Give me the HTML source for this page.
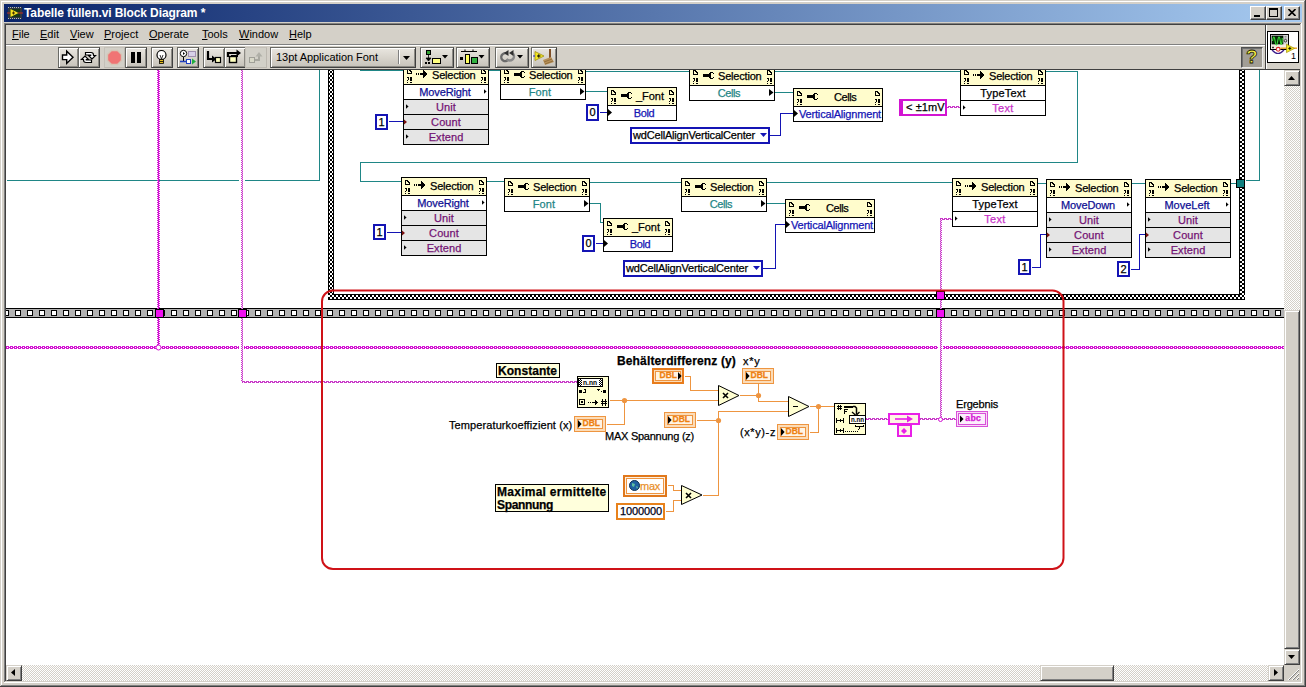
<!DOCTYPE html>
<html><head><meta charset="utf-8">
<style>
html,body{margin:0;padding:0;}
body{width:1306px;height:687px;overflow:hidden;background:#d4d0c8;font-family:"Liberation Sans",sans-serif;font-size:11px;position:relative;}
.a{position:absolute;}
.tx{white-space:nowrap;font-size:11px;line-height:13px;letter-spacing:-0.25px;-webkit-text-stroke:0.25px currentColor;}
#win{position:absolute;left:0;top:0;width:1306px;height:687px;background:#d4d0c8;overflow:hidden;}
#title{left:4px;top:4px;width:1298px;height:18px;background:linear-gradient(90deg,#0a246a 0%,#a6caf0 100%);}
#title .t{left:20px;top:2px;color:#fff;font-weight:bold;font-size:12px;white-space:nowrap;letter-spacing:-0.1px;}
.wb{position:absolute;top:6px;width:16px;height:14px;background:#d4d0c8;box-sizing:border-box;border:1px solid;border-color:#fff #404040 #404040 #fff;box-shadow:inset -1px -1px 0 #808080;}
#menu{left:6px;top:25px;width:1259px;height:19px;}
#menu span{position:absolute;top:3px;font-size:11px;color:#000;white-space:nowrap;}
.tb{position:absolute;top:47px;height:21px;box-sizing:border-box;background:linear-gradient(#e9e6e0,#d8d4cc 50%,#c6c2ba);border:1px solid;border-color:#6a6a66 #404040 #404040 #6a6a66;box-shadow:inset 1px 1px 0 #fff,inset -1px -1px 0 #8c8a84;}
.tb.flat{border-color:#c4c0b8 #bcb8b0 #bcb8b0 #c4c0b8;box-shadow:none;background:#d2d0c8;}
.tb.pr{border-color:#505050 #e8e8e8 #e8e8e8 #505050;background:#a29e96;box-shadow:inset 1px 1px 0 #707070;}
#canvas{left:6px;top:70px;width:1278px;height:595px;background:#fff;overflow:hidden;}
#cv{position:absolute;left:-6px;top:-70px;width:1306px;height:687px;}
.dither{background-image:conic-gradient(#fff 25%,#d4d0c8 0 50%,#fff 0 75%,#d4d0c8 0);background-size:2px 2px;}
.sbtn{position:absolute;box-sizing:border-box;background:#d4d0c8;border:1px solid;border-color:#d4d0c8 #404040 #404040 #d4d0c8;box-shadow:inset 1px 1px 0 #fff,inset -1px -1px 0 #808080;}
</style></head><body>
<div id="win">
<svg width="0" height="0" style="position:absolute"><defs>
<g id="doc"><path d="M0,0h3v1h1v1h1v3h-5z" fill="#000"/><path d="M1,1h1v1h1v1h1v1h-3z" fill="#fffccc"/>
<path d="M0,8h2v3h-1v-2h-1z M0,11h1v1h-1z M0,13h1v1h-1z M3,8h2v4h-2z M3,13h2v1h-2z" fill="#000"/></g>
<g id="inv"><rect x="0" y="4" width="1" height="2" fill="#000"/><rect x="2" y="4" width="1" height="2" fill="#000"/><rect x="4" y="4" width="5" height="2" fill="#000"/><path d="M7,1h1v1h1v1h1v1h1v2h-1v1h-1v1h-1v1h-1z" fill="#000"/></g>
<g id="prop"><rect x="0" y="4" width="7" height="3" fill="#000"/><path d="M7,2h3v1h1v1h-1v-1h-2v5h2v-1h1v1h-1v1h-3v-1h-1v-5h1z" fill="#000"/></g>
<pattern id="chk" width="2" height="2" patternUnits="userSpaceOnUse"><rect width="2" height="2" fill="#fff"/><rect width="1" height="1" fill="#000"/><rect x="1" y="1" width="1" height="1" fill="#000"/></pattern>
</defs></svg>
<div class="a" style="left:1px;top:1px;width:1303px;height:1px;background:#fff"></div>
<div class="a" style="left:1px;top:1px;width:1px;height:684px;background:#fff"></div>
<div class="a" style="left:0;top:686px;width:1306px;height:1px;background:#404040"></div>
<div class="a" style="left:1305px;top:0;width:1px;height:687px;background:#404040"></div>
<div class="a" style="left:1px;top:685px;width:1304px;height:1px;background:#808080"></div>
<div class="a" style="left:1304px;top:1px;width:1px;height:685px;background:#808080"></div>
<div id="title" class="a">
<svg class="a" style="left:3px;top:1px" width="16" height="16"><rect x="1" y="2" width="14" height="12" fill="#303840"/><path d="M1,2.5h14M1,13.5h14" stroke="#b0b8c0" stroke-dasharray="1,1"/><rect x="3" y="4" width="10" height="8" fill="#183818"/><path d="M3.5,4l8,4l-8,4z" fill="#f8e020"/><path d="M5,8h3M6.5,6.5v3" stroke="#403000"/><path d="M0,8h3M11,8h5" stroke="#c03020"/></svg>
<div class="a t">Tabelle füllen.vi Block Diagram *</div></div>
<div class="wb" style="left:1250px"><svg class="a" style="left:3px;top:8px" width="6" height="2"><rect width="6" height="2" fill="#000"/></svg></div>
<div class="wb" style="left:1266px"><svg class="a" style="left:2px;top:1px" width="9" height="9"><rect x="0.5" y="1" width="8" height="7.5" fill="none" stroke="#000"/><rect x="0" y="0" width="9" height="2" fill="#000"/></svg></div>
<div class="wb" style="left:1284px"><svg class="a" style="left:3px;top:2px" width="8" height="7"><path d="M0.5,0l7,7M7.5,0l-7,7" stroke="#000" stroke-width="1.6"/></svg></div>
<div class="a" style="left:4px;top:23px;width:1298px;height:1px;background:#808080"></div>
<div class="a" style="left:4px;top:23px;width:1px;height:660px;background:#808080"></div>
<div class="a" style="left:5px;top:24px;width:1296px;height:1px;background:#404040"></div>
<div class="a" style="left:5px;top:24px;width:1px;height:658px;background:#404040"></div>
<div class="a" style="left:4px;top:682px;width:1298px;height:1px;background:#fff"></div>
<div class="a" style="left:1301px;top:23px;width:1px;height:660px;background:#fff"></div>
<div class="a" style="left:5px;top:681px;width:1296px;height:1px;background:#d4d0c8"></div>
<div class="a" style="left:1300px;top:24px;width:1px;height:658px;background:#d4d0c8"></div>
<div id="menu" class="a">
<span style="left:6px"><u>F</u>ile</span><span style="left:34px"><u>E</u>dit</span><span style="left:64px"><u>V</u>iew</span><span style="left:98px"><u>P</u>roject</span><span style="left:143px"><u>O</u>perate</span><span style="left:196px"><u>T</u>ools</span><span style="left:233px"><u>W</u>indow</span><span style="left:283px"><u>H</u>elp</span>
</div>
<div class="a" style="left:6px;top:44px;width:1259px;height:1px;background:#808080"></div>
<div class="a" style="left:6px;top:45px;width:1259px;height:1px;background:#fff"></div>
<div id="canvas" class="a"><div id="cv">
<svg class="a" style="left:0;top:0" width="1306" height="687" shape-rendering="crispEdges"><defs>
<pattern id="ring" width="4" height="4" patternUnits="userSpaceOnUse" x="1" y="2"><rect width="4" height="4" fill="#000"/><rect x="1" y="0" width="2" height="1" fill="#fff"/><rect x="1" y="3" width="2" height="1" fill="#fff"/><rect x="0" y="1" width="1" height="2" fill="#fff"/><rect x="3" y="1" width="1" height="2" fill="#fff"/></pattern>
<pattern id="chain" width="4" height="3" patternUnits="userSpaceOnUse" x="2" y="346"><rect x="0" y="0" width="3" height="3" fill="#d214d2"/><rect x="1" y="1" width="1" height="1" fill="#fff"/><rect x="3" y="1" width="1" height="1" fill="#d214d2"/></pattern>
<pattern id="hthin" width="4" height="2" patternUnits="userSpaceOnUse" x="0" y="0"><rect x="0" y="0" width="3" height="1" fill="#c838c8"/><rect x="2" y="1" width="3" height="1" fill="#c838c8"/><rect x="0" y="1" width="1" height="1" fill="#c838c8"/></pattern>
<pattern id="vthin" width="2" height="2" patternUnits="userSpaceOnUse" x="1" y="0"><rect x="0" y="0" width="1" height="1" fill="#c838c8"/><rect x="1" y="1" width="1" height="1" fill="#c838c8"/><rect x="1" y="0" width="1" height="1" fill="#e6a0e6"/></pattern>
<pattern id="vthick" width="3" height="2" patternUnits="userSpaceOnUse" x="1" y="0"><rect x="0" y="0" width="2" height="1" fill="#d214d2"/><rect x="1" y="1" width="2" height="1" fill="#d214d2"/></pattern>
</defs>
<rect x="328" y="60" width="6" height="240" fill="url(#ring)" />
<rect x="328" y="60" width="1" height="240" fill="#000" />
<rect x="333" y="60" width="1" height="235" fill="#000" />
<rect x="1239" y="60" width="6" height="240" fill="url(#ring)" />
<rect x="1239" y="60" width="1" height="235" fill="#000" />
<rect x="1244" y="60" width="1" height="240" fill="#000" />
<rect x="328" y="294" width="917" height="6" fill="url(#ring)" />
<rect x="333" y="294" width="907" height="1" fill="#000" />
<rect x="328" y="299" width="917" height="1" fill="#000" />
<rect x="6" y="308" width="1278" height="10" fill="#b2b2b2" />
<rect x="6" y="308" width="1278" height="1" fill="#000" />
<rect x="6" y="317" width="1278" height="1" fill="#000" />
<rect x="3" y="310" width="6" height="6" fill="#000" />
<rect x="4" y="311" width="4" height="4" fill="#fff" />
<rect x="15" y="310" width="6" height="6" fill="#000" />
<rect x="16" y="311" width="4" height="4" fill="#fff" />
<rect x="27" y="310" width="6" height="6" fill="#000" />
<rect x="28" y="311" width="4" height="4" fill="#fff" />
<rect x="39" y="310" width="6" height="6" fill="#000" />
<rect x="40" y="311" width="4" height="4" fill="#fff" />
<rect x="51" y="310" width="6" height="6" fill="#000" />
<rect x="52" y="311" width="4" height="4" fill="#fff" />
<rect x="63" y="310" width="6" height="6" fill="#000" />
<rect x="64" y="311" width="4" height="4" fill="#fff" />
<rect x="75" y="310" width="6" height="6" fill="#000" />
<rect x="76" y="311" width="4" height="4" fill="#fff" />
<rect x="87" y="310" width="6" height="6" fill="#000" />
<rect x="88" y="311" width="4" height="4" fill="#fff" />
<rect x="99" y="310" width="6" height="6" fill="#000" />
<rect x="100" y="311" width="4" height="4" fill="#fff" />
<rect x="111" y="310" width="6" height="6" fill="#000" />
<rect x="112" y="311" width="4" height="4" fill="#fff" />
<rect x="123" y="310" width="6" height="6" fill="#000" />
<rect x="124" y="311" width="4" height="4" fill="#fff" />
<rect x="135" y="310" width="6" height="6" fill="#000" />
<rect x="136" y="311" width="4" height="4" fill="#fff" />
<rect x="147" y="310" width="6" height="6" fill="#000" />
<rect x="148" y="311" width="4" height="4" fill="#fff" />
<rect x="159" y="310" width="6" height="6" fill="#000" />
<rect x="160" y="311" width="4" height="4" fill="#fff" />
<rect x="171" y="310" width="6" height="6" fill="#000" />
<rect x="172" y="311" width="4" height="4" fill="#fff" />
<rect x="183" y="310" width="6" height="6" fill="#000" />
<rect x="184" y="311" width="4" height="4" fill="#fff" />
<rect x="195" y="310" width="6" height="6" fill="#000" />
<rect x="196" y="311" width="4" height="4" fill="#fff" />
<rect x="207" y="310" width="6" height="6" fill="#000" />
<rect x="208" y="311" width="4" height="4" fill="#fff" />
<rect x="219" y="310" width="6" height="6" fill="#000" />
<rect x="220" y="311" width="4" height="4" fill="#fff" />
<rect x="231" y="310" width="6" height="6" fill="#000" />
<rect x="232" y="311" width="4" height="4" fill="#fff" />
<rect x="243" y="310" width="6" height="6" fill="#000" />
<rect x="244" y="311" width="4" height="4" fill="#fff" />
<rect x="255" y="310" width="6" height="6" fill="#000" />
<rect x="256" y="311" width="4" height="4" fill="#fff" />
<rect x="267" y="310" width="6" height="6" fill="#000" />
<rect x="268" y="311" width="4" height="4" fill="#fff" />
<rect x="279" y="310" width="6" height="6" fill="#000" />
<rect x="280" y="311" width="4" height="4" fill="#fff" />
<rect x="291" y="310" width="6" height="6" fill="#000" />
<rect x="292" y="311" width="4" height="4" fill="#fff" />
<rect x="303" y="310" width="6" height="6" fill="#000" />
<rect x="304" y="311" width="4" height="4" fill="#fff" />
<rect x="315" y="310" width="6" height="6" fill="#000" />
<rect x="316" y="311" width="4" height="4" fill="#fff" />
<rect x="327" y="310" width="6" height="6" fill="#000" />
<rect x="328" y="311" width="4" height="4" fill="#fff" />
<rect x="339" y="310" width="6" height="6" fill="#000" />
<rect x="340" y="311" width="4" height="4" fill="#fff" />
<rect x="351" y="310" width="6" height="6" fill="#000" />
<rect x="352" y="311" width="4" height="4" fill="#fff" />
<rect x="363" y="310" width="6" height="6" fill="#000" />
<rect x="364" y="311" width="4" height="4" fill="#fff" />
<rect x="375" y="310" width="6" height="6" fill="#000" />
<rect x="376" y="311" width="4" height="4" fill="#fff" />
<rect x="387" y="310" width="6" height="6" fill="#000" />
<rect x="388" y="311" width="4" height="4" fill="#fff" />
<rect x="399" y="310" width="6" height="6" fill="#000" />
<rect x="400" y="311" width="4" height="4" fill="#fff" />
<rect x="411" y="310" width="6" height="6" fill="#000" />
<rect x="412" y="311" width="4" height="4" fill="#fff" />
<rect x="423" y="310" width="6" height="6" fill="#000" />
<rect x="424" y="311" width="4" height="4" fill="#fff" />
<rect x="435" y="310" width="6" height="6" fill="#000" />
<rect x="436" y="311" width="4" height="4" fill="#fff" />
<rect x="447" y="310" width="6" height="6" fill="#000" />
<rect x="448" y="311" width="4" height="4" fill="#fff" />
<rect x="459" y="310" width="6" height="6" fill="#000" />
<rect x="460" y="311" width="4" height="4" fill="#fff" />
<rect x="471" y="310" width="6" height="6" fill="#000" />
<rect x="472" y="311" width="4" height="4" fill="#fff" />
<rect x="483" y="310" width="6" height="6" fill="#000" />
<rect x="484" y="311" width="4" height="4" fill="#fff" />
<rect x="495" y="310" width="6" height="6" fill="#000" />
<rect x="496" y="311" width="4" height="4" fill="#fff" />
<rect x="507" y="310" width="6" height="6" fill="#000" />
<rect x="508" y="311" width="4" height="4" fill="#fff" />
<rect x="519" y="310" width="6" height="6" fill="#000" />
<rect x="520" y="311" width="4" height="4" fill="#fff" />
<rect x="531" y="310" width="6" height="6" fill="#000" />
<rect x="532" y="311" width="4" height="4" fill="#fff" />
<rect x="543" y="310" width="6" height="6" fill="#000" />
<rect x="544" y="311" width="4" height="4" fill="#fff" />
<rect x="555" y="310" width="6" height="6" fill="#000" />
<rect x="556" y="311" width="4" height="4" fill="#fff" />
<rect x="567" y="310" width="6" height="6" fill="#000" />
<rect x="568" y="311" width="4" height="4" fill="#fff" />
<rect x="579" y="310" width="6" height="6" fill="#000" />
<rect x="580" y="311" width="4" height="4" fill="#fff" />
<rect x="591" y="310" width="6" height="6" fill="#000" />
<rect x="592" y="311" width="4" height="4" fill="#fff" />
<rect x="603" y="310" width="6" height="6" fill="#000" />
<rect x="604" y="311" width="4" height="4" fill="#fff" />
<rect x="615" y="310" width="6" height="6" fill="#000" />
<rect x="616" y="311" width="4" height="4" fill="#fff" />
<rect x="627" y="310" width="6" height="6" fill="#000" />
<rect x="628" y="311" width="4" height="4" fill="#fff" />
<rect x="639" y="310" width="6" height="6" fill="#000" />
<rect x="640" y="311" width="4" height="4" fill="#fff" />
<rect x="651" y="310" width="6" height="6" fill="#000" />
<rect x="652" y="311" width="4" height="4" fill="#fff" />
<rect x="663" y="310" width="6" height="6" fill="#000" />
<rect x="664" y="311" width="4" height="4" fill="#fff" />
<rect x="675" y="310" width="6" height="6" fill="#000" />
<rect x="676" y="311" width="4" height="4" fill="#fff" />
<rect x="687" y="310" width="6" height="6" fill="#000" />
<rect x="688" y="311" width="4" height="4" fill="#fff" />
<rect x="699" y="310" width="6" height="6" fill="#000" />
<rect x="700" y="311" width="4" height="4" fill="#fff" />
<rect x="711" y="310" width="6" height="6" fill="#000" />
<rect x="712" y="311" width="4" height="4" fill="#fff" />
<rect x="723" y="310" width="6" height="6" fill="#000" />
<rect x="724" y="311" width="4" height="4" fill="#fff" />
<rect x="735" y="310" width="6" height="6" fill="#000" />
<rect x="736" y="311" width="4" height="4" fill="#fff" />
<rect x="747" y="310" width="6" height="6" fill="#000" />
<rect x="748" y="311" width="4" height="4" fill="#fff" />
<rect x="759" y="310" width="6" height="6" fill="#000" />
<rect x="760" y="311" width="4" height="4" fill="#fff" />
<rect x="771" y="310" width="6" height="6" fill="#000" />
<rect x="772" y="311" width="4" height="4" fill="#fff" />
<rect x="783" y="310" width="6" height="6" fill="#000" />
<rect x="784" y="311" width="4" height="4" fill="#fff" />
<rect x="795" y="310" width="6" height="6" fill="#000" />
<rect x="796" y="311" width="4" height="4" fill="#fff" />
<rect x="807" y="310" width="6" height="6" fill="#000" />
<rect x="808" y="311" width="4" height="4" fill="#fff" />
<rect x="819" y="310" width="6" height="6" fill="#000" />
<rect x="820" y="311" width="4" height="4" fill="#fff" />
<rect x="831" y="310" width="6" height="6" fill="#000" />
<rect x="832" y="311" width="4" height="4" fill="#fff" />
<rect x="843" y="310" width="6" height="6" fill="#000" />
<rect x="844" y="311" width="4" height="4" fill="#fff" />
<rect x="855" y="310" width="6" height="6" fill="#000" />
<rect x="856" y="311" width="4" height="4" fill="#fff" />
<rect x="867" y="310" width="6" height="6" fill="#000" />
<rect x="868" y="311" width="4" height="4" fill="#fff" />
<rect x="879" y="310" width="6" height="6" fill="#000" />
<rect x="880" y="311" width="4" height="4" fill="#fff" />
<rect x="891" y="310" width="6" height="6" fill="#000" />
<rect x="892" y="311" width="4" height="4" fill="#fff" />
<rect x="903" y="310" width="6" height="6" fill="#000" />
<rect x="904" y="311" width="4" height="4" fill="#fff" />
<rect x="915" y="310" width="6" height="6" fill="#000" />
<rect x="916" y="311" width="4" height="4" fill="#fff" />
<rect x="927" y="310" width="6" height="6" fill="#000" />
<rect x="928" y="311" width="4" height="4" fill="#fff" />
<rect x="939" y="310" width="6" height="6" fill="#000" />
<rect x="940" y="311" width="4" height="4" fill="#fff" />
<rect x="951" y="310" width="6" height="6" fill="#000" />
<rect x="952" y="311" width="4" height="4" fill="#fff" />
<rect x="963" y="310" width="6" height="6" fill="#000" />
<rect x="964" y="311" width="4" height="4" fill="#fff" />
<rect x="975" y="310" width="6" height="6" fill="#000" />
<rect x="976" y="311" width="4" height="4" fill="#fff" />
<rect x="987" y="310" width="6" height="6" fill="#000" />
<rect x="988" y="311" width="4" height="4" fill="#fff" />
<rect x="999" y="310" width="6" height="6" fill="#000" />
<rect x="1000" y="311" width="4" height="4" fill="#fff" />
<rect x="1011" y="310" width="6" height="6" fill="#000" />
<rect x="1012" y="311" width="4" height="4" fill="#fff" />
<rect x="1023" y="310" width="6" height="6" fill="#000" />
<rect x="1024" y="311" width="4" height="4" fill="#fff" />
<rect x="1035" y="310" width="6" height="6" fill="#000" />
<rect x="1036" y="311" width="4" height="4" fill="#fff" />
<rect x="1047" y="310" width="6" height="6" fill="#000" />
<rect x="1048" y="311" width="4" height="4" fill="#fff" />
<rect x="1059" y="310" width="6" height="6" fill="#000" />
<rect x="1060" y="311" width="4" height="4" fill="#fff" />
<rect x="1071" y="310" width="6" height="6" fill="#000" />
<rect x="1072" y="311" width="4" height="4" fill="#fff" />
<rect x="1083" y="310" width="6" height="6" fill="#000" />
<rect x="1084" y="311" width="4" height="4" fill="#fff" />
<rect x="1095" y="310" width="6" height="6" fill="#000" />
<rect x="1096" y="311" width="4" height="4" fill="#fff" />
<rect x="1107" y="310" width="6" height="6" fill="#000" />
<rect x="1108" y="311" width="4" height="4" fill="#fff" />
<rect x="1119" y="310" width="6" height="6" fill="#000" />
<rect x="1120" y="311" width="4" height="4" fill="#fff" />
<rect x="1131" y="310" width="6" height="6" fill="#000" />
<rect x="1132" y="311" width="4" height="4" fill="#fff" />
<rect x="1143" y="310" width="6" height="6" fill="#000" />
<rect x="1144" y="311" width="4" height="4" fill="#fff" />
<rect x="1155" y="310" width="6" height="6" fill="#000" />
<rect x="1156" y="311" width="4" height="4" fill="#fff" />
<rect x="1167" y="310" width="6" height="6" fill="#000" />
<rect x="1168" y="311" width="4" height="4" fill="#fff" />
<rect x="1179" y="310" width="6" height="6" fill="#000" />
<rect x="1180" y="311" width="4" height="4" fill="#fff" />
<rect x="1191" y="310" width="6" height="6" fill="#000" />
<rect x="1192" y="311" width="4" height="4" fill="#fff" />
<rect x="1203" y="310" width="6" height="6" fill="#000" />
<rect x="1204" y="311" width="4" height="4" fill="#fff" />
<rect x="1215" y="310" width="6" height="6" fill="#000" />
<rect x="1216" y="311" width="4" height="4" fill="#fff" />
<rect x="1227" y="310" width="6" height="6" fill="#000" />
<rect x="1228" y="311" width="4" height="4" fill="#fff" />
<rect x="1239" y="310" width="6" height="6" fill="#000" />
<rect x="1240" y="311" width="4" height="4" fill="#fff" />
<rect x="1251" y="310" width="6" height="6" fill="#000" />
<rect x="1252" y="311" width="4" height="4" fill="#fff" />
<rect x="1263" y="310" width="6" height="6" fill="#000" />
<rect x="1264" y="311" width="4" height="4" fill="#fff" />
<rect x="1275" y="310" width="6" height="6" fill="#000" />
<rect x="1276" y="311" width="4" height="4" fill="#fff" />
<path d="M6.5,180.5 L319.5,180.5 L319.5,60.5" stroke="#1f8686" stroke-width="1" fill="none"/>
<path d="M360.5,60.5 L360.5,70.5 L500.5,70.5" stroke="#1f8686" stroke-width="1" fill="none"/>
<path d="M570.5,71.5 L1077.5,71.5 L1077.5,162.5 L360.5,162.5 L360.5,181.5 L401.5,181.5" stroke="#1f8686" stroke-width="1" fill="none"/>
<path d="M486.5,181.5 L504.5,181.5" stroke="#1f8686" stroke-width="1" fill="none"/>
<path d="M589.5,182.5 L953.5,182.5" stroke="#1f8686" stroke-width="1" fill="none"/>
<path d="M1037.5,183.5 L1237.5,183.5" stroke="#1f8686" stroke-width="1" fill="none"/>
<path d="M1245.5,180.5 L1259.5,180.5 L1259.5,60.5" stroke="#1f8686" stroke-width="1" fill="none"/>
<path d="M585.5,91.5 L607.5,91.5" stroke="#1f8686" stroke-width="1" fill="none"/>
<path d="M774.5,92.5 L793.5,92.5" stroke="#1f8686" stroke-width="1" fill="none"/>
<path d="M589.5,203.5 L600.5,203.5 L600.5,222.5 L603.5,222.5" stroke="#1f8686" stroke-width="1" fill="none"/>
<path d="M766.5,203.5 L785.5,203.5" stroke="#1f8686" stroke-width="1" fill="none"/>
<path d="M388.5,121.5 L403.5,121.5" stroke="#1414b4" stroke-width="1" fill="none"/>
<path d="M386.5,232.5 L401.5,232.5" stroke="#1414b4" stroke-width="1" fill="none"/>
<path d="M599.5,112.5 L607.5,112.5" stroke="#1414b4" stroke-width="1" fill="none"/>
<path d="M595.5,243.5 L603.5,243.5" stroke="#1414b4" stroke-width="1" fill="none"/>
<path d="M769.5,135.5 L780.5,135.5 L780.5,113.5 L793.5,113.5" stroke="#1414b4" stroke-width="1" fill="none"/>
<path d="M762.5,268.5 L775.5,268.5 L775.5,224.5 L785.5,224.5" stroke="#1414b4" stroke-width="1" fill="none"/>
<path d="M1031.5,267.5 L1040.5,267.5 L1040.5,234.5 L1047.5,234.5" stroke="#1414b4" stroke-width="1" fill="none"/>
<path d="M1130.5,269.5 L1139.5,269.5 L1139.5,234.5 L1145.5,234.5" stroke="#1414b4" stroke-width="1" fill="none"/>
<path d="M609.5,400.5 L718.5,400.5" stroke="#ee9540" stroke-width="1" fill="none"/>
<path d="M606.5,424.5 L624.5,424.5 L624.5,400.5" stroke="#ee9540" stroke-width="1" fill="none"/>
<path d="M684.5,376.5 L690.5,376.5 L690.5,390.5 L718.5,390.5" stroke="#ee9540" stroke-width="1" fill="none"/>
<path d="M739.5,395.5 L758.5,395.5 L758.5,401.5 L788.5,401.5" stroke="#ee9540" stroke-width="1" fill="none"/>
<path d="M758.5,383.5 L758.5,395.5" stroke="#ee9540" stroke-width="1" fill="none"/>
<path d="M809.5,406.5 L834.5,406.5" stroke="#ee9540" stroke-width="1" fill="none"/>
<path d="M809.5,432.5 L818.5,432.5 L818.5,406.5" stroke="#ee9540" stroke-width="1" fill="none"/>
<path d="M696.5,420.5 L718.5,420.5" stroke="#ee9540" stroke-width="1" fill="none"/>
<path d="M788.5,411.5 L718.5,411.5 L718.5,495.5 L702.5,495.5" stroke="#ee9540" stroke-width="1" fill="none"/>
<path d="M667.5,485.5 L673.5,485.5 L673.5,490.5 L681.5,490.5" stroke="#ee9540" stroke-width="1" fill="none"/>
<path d="M665.5,511.5 L673.5,511.5 L673.5,500.5 L681.5,500.5" stroke="#ee9540" stroke-width="1" fill="none"/>
<circle cx="624.5" cy="400.5" r="2.6" fill="#ee9540" shape-rendering="auto"/>
<circle cx="758.5" cy="395.5" r="2.6" fill="#ee9540" shape-rendering="auto"/>
<circle cx="818.5" cy="406.5" r="2.6" fill="#ee9540" shape-rendering="auto"/>
<circle cx="718.5" cy="420.5" r="2.6" fill="#ee9540" shape-rendering="auto"/>
<rect x="6" y="346" width="1278" height="3" fill="url(#chain)" />
<rect x="239" y="345" width="5" height="5" fill="#fff" />
<rect x="938" y="345" width="5" height="5" fill="#fff" />
<rect x="239" y="180" width="6" height="1" fill="#fff" />
<rect x="157" y="60" width="3" height="287" fill="url(#vthick)" />
<rect x="241" y="60" width="2" height="322" fill="url(#vthin)" />
<rect x="242" y="381" width="336" height="2" fill="url(#hthin)" />
<rect x="940" y="218" width="13" height="2" fill="url(#hthin)" />
<rect x="940" y="219" width="2" height="200" fill="url(#vthin)" />
<rect x="866" y="418" width="22" height="2" fill="url(#hthin)" />
<rect x="920" y="418" width="36" height="2" fill="url(#hthin)" />
<rect x="947" y="106" width="13" height="2" fill="url(#hthin)" />
<circle cx="158.5" cy="347.5" r="2.5" fill="#fff" stroke="#d214d2" shape-rendering="auto"/>
<circle cx="940.5" cy="419.5" r="2" fill="#fff" stroke="#d214d2" shape-rendering="auto"/>
<rect x="155" y="309" width="9" height="9" fill="#000" />
<rect x="156" y="310" width="7" height="7" fill="#f010f0" />
<rect x="238" y="309" width="9" height="9" fill="#000" />
<rect x="239" y="310" width="7" height="7" fill="#f010f0" />
<rect x="936" y="309" width="9" height="9" fill="#000" />
<rect x="937" y="310" width="7" height="7" fill="#f010f0" />
<rect x="936" y="291" width="9" height="9" fill="#000" />
<rect x="937" y="292" width="7" height="7" fill="#f010f0" />
<rect x="1236" y="179" width="9" height="9" fill="#000" />
<rect x="1237" y="180" width="7" height="7" fill="#108080" />
</svg>
<div class="a" style="left:403px;top:66px;width:84px;height:77px;border:1px solid #000;background:#fff"></div>
<div class="a" style="left:404px;top:67px;width:84px;height:17px;background:#fffccc;"></div>
<div class="a" style="left:404px;top:84px;width:84px;height:1px;background:#000;"></div>
<svg class="a" style="left:403px;top:66px" width="86" height="19" shape-rendering="crispEdges"><use href="#doc" x="4" y="3"/><use href="#doc" x="78" y="3"/><use href="#inv" x="13" y="3"/></svg>
<div class="a tx " style="left:432px;top:69px;color:#000;letter-spacing:-0.197px;">Selection</div>
<div class="a tx" style="left:404px;top:86px;width:82px;text-align:center;color:#101094;letter-spacing:-0.120px;">MoveRight</div>
<svg class="a" style="left:484px;top:89px" width="3" height="5" ><path d="M0,0.3L2.6,2.5L0,4.7z" fill="#000"/></svg>
<div class="a" style="left:404px;top:99px;width:84px;height:1px;background:#000;"></div>
<div class="a" style="left:404px;top:100px;width:84px;height:14px;background:#e5e5e5;"></div>
<div class="a tx" style="left:404px;top:101px;width:84px;text-align:center;color:#741474;letter-spacing:0.110px;">Unit</div>
<svg class="a" style="left:406px;top:104px" width="3" height="5" ><path d="M0,0.3L2.6,2.5L0,4.7z" fill="#000"/></svg>
<div class="a" style="left:404px;top:114px;width:84px;height:1px;background:#000;"></div>
<div class="a" style="left:404px;top:115px;width:84px;height:14px;background:#e5e5e5;"></div>
<div class="a tx" style="left:404px;top:116px;width:84px;text-align:center;color:#741474;letter-spacing:0.088px;">Count</div>
<svg class="a" style="left:403px;top:119px" width="5" height="6" ><path d="M1,0.5L4,3L1,5.5z" fill="#7a1010"/></svg>
<div class="a" style="left:404px;top:129px;width:84px;height:1px;background:#000;"></div>
<div class="a" style="left:404px;top:130px;width:84px;height:14px;background:#e5e5e5;"></div>
<div class="a tx" style="left:404px;top:131px;width:84px;text-align:center;color:#741474;letter-spacing:0.075px;">Extend</div>
<svg class="a" style="left:406px;top:134px" width="3" height="5" ><path d="M0,0.3L2.6,2.5L0,4.7z" fill="#000"/></svg>
<div class="a" style="left:404px;top:144px;width:84px;height:1px;background:#000;"></div>
<div class="a" style="left:500px;top:66px;width:84px;height:32px;border:1px solid #000;background:#fff"></div>
<div class="a" style="left:501px;top:67px;width:84px;height:17px;background:#fffccc;"></div>
<div class="a" style="left:501px;top:84px;width:84px;height:1px;background:#000;"></div>
<svg class="a" style="left:500px;top:66px" width="86" height="19" shape-rendering="crispEdges"><use href="#doc" x="4" y="3"/><use href="#doc" x="78" y="3"/><use href="#prop" x="14" y="3"/></svg>
<div class="a tx " style="left:529px;top:69px;color:#000;letter-spacing:-0.197px;">Selection</div>
<div class="a tx" style="left:501px;top:86px;width:78px;text-align:center;color:#1f8686;letter-spacing:0.170px;">Font</div>
<svg class="a" style="left:580px;top:88px" width="5" height="7" ><path d="M0,0L4.5,3.5L0,7z" fill="#000"/></svg>
<div class="a" style="left:501px;top:99px;width:84px;height:1px;background:#000;"></div>
<div class="a" style="left:607px;top:87px;width:68px;height:32px;border:1px solid #000;background:#fff"></div>
<div class="a" style="left:608px;top:88px;width:68px;height:17px;background:#fffccc;"></div>
<div class="a" style="left:608px;top:105px;width:68px;height:1px;background:#000;"></div>
<svg class="a" style="left:607px;top:87px" width="70" height="19" shape-rendering="crispEdges"><use href="#doc" x="4" y="3"/><use href="#doc" x="62" y="3"/><use href="#prop" x="14" y="3"/></svg>
<div class="a tx " style="left:636px;top:90px;color:#000;letter-spacing:-0.028px;">_Font</div>
<div class="a tx" style="left:612px;top:107px;width:64px;text-align:center;color:#1414b4;letter-spacing:-0.383px;">Bold</div>
<svg class="a" style="left:608px;top:109px" width="4" height="7" ><path d="M0,0L4,3.5L0,7z" fill="#000"/></svg>
<div class="a" style="left:608px;top:120px;width:68px;height:1px;background:#000;"></div>
<div class="a" style="left:689px;top:67px;width:84px;height:32px;border:1px solid #000;background:#fff"></div>
<div class="a" style="left:690px;top:68px;width:84px;height:17px;background:#fffccc;"></div>
<div class="a" style="left:690px;top:85px;width:84px;height:1px;background:#000;"></div>
<svg class="a" style="left:689px;top:67px" width="86" height="19" shape-rendering="crispEdges"><use href="#doc" x="4" y="3"/><use href="#doc" x="78" y="3"/><use href="#prop" x="14" y="3"/></svg>
<div class="a tx " style="left:718px;top:70px;color:#000;letter-spacing:-0.197px;">Selection</div>
<div class="a tx" style="left:690px;top:87px;width:78px;text-align:center;color:#1f8686;letter-spacing:-0.410px;">Cells</div>
<svg class="a" style="left:769px;top:89px" width="5" height="7" ><path d="M0,0L4.5,3.5L0,7z" fill="#000"/></svg>
<div class="a" style="left:690px;top:100px;width:84px;height:1px;background:#000;"></div>
<div class="a" style="left:793px;top:88px;width:88px;height:32px;border:1px solid #000;background:#fff"></div>
<div class="a" style="left:794px;top:89px;width:88px;height:17px;background:#fffccc;"></div>
<div class="a" style="left:794px;top:106px;width:88px;height:1px;background:#000;"></div>
<svg class="a" style="left:793px;top:88px" width="90" height="19" shape-rendering="crispEdges"><use href="#doc" x="4" y="3"/><use href="#doc" x="82" y="3"/><use href="#prop" x="14" y="3"/></svg>
<div class="a tx " style="left:834px;top:91px;color:#000;letter-spacing:-0.410px;">Cells</div>
<div class="a tx" style="left:798px;top:108px;width:84px;text-align:center;color:#1414b4;letter-spacing:-0.176px;">VerticalAlignment</div>
<svg class="a" style="left:794px;top:110px" width="4" height="7" ><path d="M0,0L4,3.5L0,7z" fill="#000"/></svg>
<div class="a" style="left:794px;top:121px;width:88px;height:1px;background:#000;"></div>
<div class="a" style="left:960px;top:67px;width:84px;height:47px;border:1px solid #000;background:#fff"></div>
<div class="a" style="left:961px;top:68px;width:84px;height:17px;background:#fffccc;"></div>
<div class="a" style="left:961px;top:85px;width:84px;height:1px;background:#000;"></div>
<svg class="a" style="left:960px;top:67px" width="86" height="19" shape-rendering="crispEdges"><use href="#doc" x="4" y="3"/><use href="#doc" x="78" y="3"/><use href="#inv" x="13" y="3"/></svg>
<div class="a tx " style="left:989px;top:70px;color:#000;letter-spacing:-0.197px;">Selection</div>
<div class="a tx" style="left:961px;top:87px;width:84px;text-align:center;color:#000;letter-spacing:0.196px;">TypeText</div>
<div class="a" style="left:961px;top:100px;width:84px;height:1px;background:#000;"></div>
<div class="a tx" style="left:961px;top:102px;width:84px;text-align:center;color:#c832c8;letter-spacing:0.327px;">Text</div>
<svg class="a" style="left:963px;top:105px" width="3" height="5" ><path d="M0,0.3L2.6,2.5L0,4.7z" fill="#000"/></svg>
<div class="a" style="left:961px;top:115px;width:84px;height:1px;background:#000;"></div>
<div class="a" style="left:375px;top:114px;width:9px;height:12px;border:2px solid #1414b4;background:#fff"></div>
<div class="a tx" style="left:375px;top:116px;width:13px;text-align:center;color:#000;">1</div>
<div class="a" style="left:586px;top:104px;width:9px;height:13px;border:2px solid #1414b4;background:#fff"></div>
<div class="a tx" style="left:586px;top:106px;width:13px;text-align:center;color:#000;">0</div>
<div class="a" style="left:630px;top:127px;width:136px;height:13px;border:2px solid #1414b4;background:#fff"></div>
<div class="a tx " style="left:633px;top:129px;color:#000;letter-spacing:-0.182px;">wdCellAlignVerticalCenter</div>
<svg class="a" style="left:760px;top:133px" width="7" height="4" ><path d="M0,0H7L3.5,4z" fill="#1414b4"/></svg>
<div class="a" style="left:899px;top:99px;width:42px;height:13px;border:2px solid #d214d2;border-left-width:4px;background:#fff"></div>
<div class="a tx " style="left:906px;top:101px;color:#000;letter-spacing:0.077px;">&lt; ±1mV</div>
<div class="a" style="left:401px;top:177px;width:84px;height:77px;border:1px solid #000;background:#fff"></div>
<div class="a" style="left:402px;top:178px;width:84px;height:17px;background:#fffccc;"></div>
<div class="a" style="left:402px;top:195px;width:84px;height:1px;background:#000;"></div>
<svg class="a" style="left:401px;top:177px" width="86" height="19" shape-rendering="crispEdges"><use href="#doc" x="4" y="3"/><use href="#doc" x="78" y="3"/><use href="#inv" x="13" y="3"/></svg>
<div class="a tx " style="left:430px;top:180px;color:#000;letter-spacing:-0.197px;">Selection</div>
<div class="a tx" style="left:402px;top:197px;width:82px;text-align:center;color:#101094;letter-spacing:-0.120px;">MoveRight</div>
<svg class="a" style="left:482px;top:200px" width="3" height="5" ><path d="M0,0.3L2.6,2.5L0,4.7z" fill="#000"/></svg>
<div class="a" style="left:402px;top:210px;width:84px;height:1px;background:#000;"></div>
<div class="a" style="left:402px;top:211px;width:84px;height:14px;background:#e5e5e5;"></div>
<div class="a tx" style="left:402px;top:212px;width:84px;text-align:center;color:#741474;letter-spacing:0.110px;">Unit</div>
<svg class="a" style="left:404px;top:215px" width="3" height="5" ><path d="M0,0.3L2.6,2.5L0,4.7z" fill="#000"/></svg>
<div class="a" style="left:402px;top:225px;width:84px;height:1px;background:#000;"></div>
<div class="a" style="left:402px;top:226px;width:84px;height:14px;background:#e5e5e5;"></div>
<div class="a tx" style="left:402px;top:227px;width:84px;text-align:center;color:#741474;letter-spacing:0.088px;">Count</div>
<svg class="a" style="left:401px;top:230px" width="5" height="6" ><path d="M1,0.5L4,3L1,5.5z" fill="#7a1010"/></svg>
<div class="a" style="left:402px;top:240px;width:84px;height:1px;background:#000;"></div>
<div class="a" style="left:402px;top:241px;width:84px;height:14px;background:#e5e5e5;"></div>
<div class="a tx" style="left:402px;top:242px;width:84px;text-align:center;color:#741474;letter-spacing:0.075px;">Extend</div>
<svg class="a" style="left:404px;top:245px" width="3" height="5" ><path d="M0,0.3L2.6,2.5L0,4.7z" fill="#000"/></svg>
<div class="a" style="left:402px;top:255px;width:84px;height:1px;background:#000;"></div>
<div class="a" style="left:504px;top:178px;width:84px;height:32px;border:1px solid #000;background:#fff"></div>
<div class="a" style="left:505px;top:179px;width:84px;height:17px;background:#fffccc;"></div>
<div class="a" style="left:505px;top:196px;width:84px;height:1px;background:#000;"></div>
<svg class="a" style="left:504px;top:178px" width="86" height="19" shape-rendering="crispEdges"><use href="#doc" x="4" y="3"/><use href="#doc" x="78" y="3"/><use href="#prop" x="14" y="3"/></svg>
<div class="a tx " style="left:533px;top:181px;color:#000;letter-spacing:-0.197px;">Selection</div>
<div class="a tx" style="left:505px;top:198px;width:78px;text-align:center;color:#1f8686;letter-spacing:0.170px;">Font</div>
<svg class="a" style="left:584px;top:200px" width="5" height="7" ><path d="M0,0L4.5,3.5L0,7z" fill="#000"/></svg>
<div class="a" style="left:505px;top:211px;width:84px;height:1px;background:#000;"></div>
<div class="a" style="left:603px;top:218px;width:68px;height:32px;border:1px solid #000;background:#fff"></div>
<div class="a" style="left:604px;top:219px;width:68px;height:17px;background:#fffccc;"></div>
<div class="a" style="left:604px;top:236px;width:68px;height:1px;background:#000;"></div>
<svg class="a" style="left:603px;top:218px" width="70" height="19" shape-rendering="crispEdges"><use href="#doc" x="4" y="3"/><use href="#doc" x="62" y="3"/><use href="#prop" x="14" y="3"/></svg>
<div class="a tx " style="left:632px;top:221px;color:#000;letter-spacing:-0.028px;">_Font</div>
<div class="a tx" style="left:608px;top:238px;width:64px;text-align:center;color:#1414b4;letter-spacing:-0.383px;">Bold</div>
<svg class="a" style="left:604px;top:240px" width="4" height="7" ><path d="M0,0L4,3.5L0,7z" fill="#000"/></svg>
<div class="a" style="left:604px;top:251px;width:68px;height:1px;background:#000;"></div>
<div class="a" style="left:681px;top:178px;width:84px;height:32px;border:1px solid #000;background:#fff"></div>
<div class="a" style="left:682px;top:179px;width:84px;height:17px;background:#fffccc;"></div>
<div class="a" style="left:682px;top:196px;width:84px;height:1px;background:#000;"></div>
<svg class="a" style="left:681px;top:178px" width="86" height="19" shape-rendering="crispEdges"><use href="#doc" x="4" y="3"/><use href="#doc" x="78" y="3"/><use href="#prop" x="14" y="3"/></svg>
<div class="a tx " style="left:710px;top:181px;color:#000;letter-spacing:-0.197px;">Selection</div>
<div class="a tx" style="left:682px;top:198px;width:78px;text-align:center;color:#1f8686;letter-spacing:-0.410px;">Cells</div>
<svg class="a" style="left:761px;top:200px" width="5" height="7" ><path d="M0,0L4.5,3.5L0,7z" fill="#000"/></svg>
<div class="a" style="left:682px;top:211px;width:84px;height:1px;background:#000;"></div>
<div class="a" style="left:785px;top:199px;width:88px;height:32px;border:1px solid #000;background:#fff"></div>
<div class="a" style="left:786px;top:200px;width:88px;height:17px;background:#fffccc;"></div>
<div class="a" style="left:786px;top:217px;width:88px;height:1px;background:#000;"></div>
<svg class="a" style="left:785px;top:199px" width="90" height="19" shape-rendering="crispEdges"><use href="#doc" x="4" y="3"/><use href="#doc" x="82" y="3"/><use href="#prop" x="14" y="3"/></svg>
<div class="a tx " style="left:826px;top:202px;color:#000;letter-spacing:-0.410px;">Cells</div>
<div class="a tx" style="left:790px;top:219px;width:84px;text-align:center;color:#1414b4;letter-spacing:-0.176px;">VerticalAlignment</div>
<svg class="a" style="left:786px;top:221px" width="4" height="7" ><path d="M0,0L4,3.5L0,7z" fill="#000"/></svg>
<div class="a" style="left:786px;top:232px;width:88px;height:1px;background:#000;"></div>
<div class="a" style="left:952px;top:178px;width:84px;height:47px;border:1px solid #000;background:#fff"></div>
<div class="a" style="left:953px;top:179px;width:84px;height:17px;background:#fffccc;"></div>
<div class="a" style="left:953px;top:196px;width:84px;height:1px;background:#000;"></div>
<svg class="a" style="left:952px;top:178px" width="86" height="19" shape-rendering="crispEdges"><use href="#doc" x="4" y="3"/><use href="#doc" x="78" y="3"/><use href="#inv" x="13" y="3"/></svg>
<div class="a tx " style="left:981px;top:181px;color:#000;letter-spacing:-0.197px;">Selection</div>
<div class="a tx" style="left:953px;top:198px;width:84px;text-align:center;color:#000;letter-spacing:0.196px;">TypeText</div>
<div class="a" style="left:953px;top:211px;width:84px;height:1px;background:#000;"></div>
<div class="a tx" style="left:953px;top:213px;width:84px;text-align:center;color:#c832c8;letter-spacing:0.327px;">Text</div>
<svg class="a" style="left:955px;top:216px" width="3" height="5" ><path d="M0,0.3L2.6,2.5L0,4.7z" fill="#000"/></svg>
<div class="a" style="left:953px;top:226px;width:84px;height:1px;background:#000;"></div>
<div class="a" style="left:1046px;top:179px;width:84px;height:77px;border:1px solid #000;background:#fff"></div>
<div class="a" style="left:1047px;top:180px;width:84px;height:17px;background:#fffccc;"></div>
<div class="a" style="left:1047px;top:197px;width:84px;height:1px;background:#000;"></div>
<svg class="a" style="left:1046px;top:179px" width="86" height="19" shape-rendering="crispEdges"><use href="#doc" x="4" y="3"/><use href="#doc" x="78" y="3"/><use href="#inv" x="13" y="3"/></svg>
<div class="a tx " style="left:1075px;top:182px;color:#000;letter-spacing:-0.197px;">Selection</div>
<div class="a tx" style="left:1047px;top:199px;width:82px;text-align:center;color:#101094;letter-spacing:-0.129px;">MoveDown</div>
<svg class="a" style="left:1127px;top:202px" width="3" height="5" ><path d="M0,0.3L2.6,2.5L0,4.7z" fill="#000"/></svg>
<div class="a" style="left:1047px;top:212px;width:84px;height:1px;background:#000;"></div>
<div class="a" style="left:1047px;top:213px;width:84px;height:14px;background:#e5e5e5;"></div>
<div class="a tx" style="left:1047px;top:214px;width:84px;text-align:center;color:#741474;letter-spacing:0.110px;">Unit</div>
<svg class="a" style="left:1049px;top:217px" width="3" height="5" ><path d="M0,0.3L2.6,2.5L0,4.7z" fill="#000"/></svg>
<div class="a" style="left:1047px;top:227px;width:84px;height:1px;background:#000;"></div>
<div class="a" style="left:1047px;top:228px;width:84px;height:14px;background:#e5e5e5;"></div>
<div class="a tx" style="left:1047px;top:229px;width:84px;text-align:center;color:#741474;letter-spacing:0.088px;">Count</div>
<svg class="a" style="left:1046px;top:232px" width="5" height="6" ><path d="M1,0.5L4,3L1,5.5z" fill="#7a1010"/></svg>
<div class="a" style="left:1047px;top:242px;width:84px;height:1px;background:#000;"></div>
<div class="a" style="left:1047px;top:243px;width:84px;height:14px;background:#e5e5e5;"></div>
<div class="a tx" style="left:1047px;top:244px;width:84px;text-align:center;color:#741474;letter-spacing:0.075px;">Extend</div>
<svg class="a" style="left:1049px;top:247px" width="3" height="5" ><path d="M0,0.3L2.6,2.5L0,4.7z" fill="#000"/></svg>
<div class="a" style="left:1047px;top:257px;width:84px;height:1px;background:#000;"></div>
<div class="a" style="left:1145px;top:179px;width:84px;height:77px;border:1px solid #000;background:#fff"></div>
<div class="a" style="left:1146px;top:180px;width:84px;height:17px;background:#fffccc;"></div>
<div class="a" style="left:1146px;top:197px;width:84px;height:1px;background:#000;"></div>
<svg class="a" style="left:1145px;top:179px" width="86" height="19" shape-rendering="crispEdges"><use href="#doc" x="4" y="3"/><use href="#doc" x="78" y="3"/><use href="#inv" x="13" y="3"/></svg>
<div class="a tx " style="left:1174px;top:182px;color:#000;letter-spacing:-0.197px;">Selection</div>
<div class="a tx" style="left:1146px;top:199px;width:82px;text-align:center;color:#101094;letter-spacing:-0.006px;">MoveLeft</div>
<svg class="a" style="left:1226px;top:202px" width="3" height="5" ><path d="M0,0.3L2.6,2.5L0,4.7z" fill="#000"/></svg>
<div class="a" style="left:1146px;top:212px;width:84px;height:1px;background:#000;"></div>
<div class="a" style="left:1146px;top:213px;width:84px;height:14px;background:#e5e5e5;"></div>
<div class="a tx" style="left:1146px;top:214px;width:84px;text-align:center;color:#741474;letter-spacing:0.110px;">Unit</div>
<svg class="a" style="left:1148px;top:217px" width="3" height="5" ><path d="M0,0.3L2.6,2.5L0,4.7z" fill="#000"/></svg>
<div class="a" style="left:1146px;top:227px;width:84px;height:1px;background:#000;"></div>
<div class="a" style="left:1146px;top:228px;width:84px;height:14px;background:#e5e5e5;"></div>
<div class="a tx" style="left:1146px;top:229px;width:84px;text-align:center;color:#741474;letter-spacing:0.088px;">Count</div>
<svg class="a" style="left:1145px;top:232px" width="5" height="6" ><path d="M1,0.5L4,3L1,5.5z" fill="#7a1010"/></svg>
<div class="a" style="left:1146px;top:242px;width:84px;height:1px;background:#000;"></div>
<div class="a" style="left:1146px;top:243px;width:84px;height:14px;background:#e5e5e5;"></div>
<div class="a tx" style="left:1146px;top:244px;width:84px;text-align:center;color:#741474;letter-spacing:0.075px;">Extend</div>
<svg class="a" style="left:1148px;top:247px" width="3" height="5" ><path d="M0,0.3L2.6,2.5L0,4.7z" fill="#000"/></svg>
<div class="a" style="left:1146px;top:257px;width:84px;height:1px;background:#000;"></div>
<div class="a" style="left:373px;top:224px;width:9px;height:12px;border:2px solid #1414b4;background:#fff"></div>
<div class="a tx" style="left:373px;top:226px;width:13px;text-align:center;color:#000;">1</div>
<div class="a" style="left:582px;top:235px;width:9px;height:13px;border:2px solid #1414b4;background:#fff"></div>
<div class="a tx" style="left:582px;top:237px;width:13px;text-align:center;color:#000;">0</div>
<div class="a" style="left:1018px;top:259px;width:9px;height:12px;border:2px solid #1414b4;background:#fff"></div>
<div class="a tx" style="left:1018px;top:261px;width:13px;text-align:center;color:#000;">1</div>
<div class="a" style="left:1117px;top:261px;width:9px;height:12px;border:2px solid #1414b4;background:#fff"></div>
<div class="a tx" style="left:1117px;top:263px;width:13px;text-align:center;color:#000;">2</div>
<div class="a" style="left:623px;top:260px;width:136px;height:13px;border:2px solid #1414b4;background:#fff"></div>
<div class="a tx " style="left:626px;top:262px;color:#000;letter-spacing:-0.182px;">wdCellAlignVerticalCenter</div>
<svg class="a" style="left:753px;top:266px" width="7" height="4" ><path d="M0,0H7L3.5,4z" fill="#1414b4"/></svg>
<div class="a" style="left:496px;top:363px;width:62px;height:13px;border:1px solid #000;background:#ffffdc"></div>
<div class="a tx " style="left:498px;top:365px;color:#000;letter-spacing:0.037px;font-weight:bold;font-size:12px;">Konstante</div>
<div class="a" style="left:495px;top:484px;width:112px;height:26px;border:1px solid #000;background:#ffffdc"></div>
<div class="a tx " style="left:497px;top:486px;color:#000;letter-spacing:0.266px;font-weight:bold;font-size:12px;">Maximal ermittelte</div>
<div class="a tx " style="left:497px;top:499px;color:#000;letter-spacing:-0.334px;font-weight:bold;font-size:12px;">Spannung</div>
<div class="a tx " style="left:617px;top:355px;color:#000;letter-spacing:0.141px;font-weight:bold;font-size:12px;">Behälterdifferenz (y)</div>
<div class="a tx " style="left:743px;top:355px;color:#000;letter-spacing:0.773px;">x*y</div>
<div class="a tx " style="left:449px;top:419px;color:#000;letter-spacing:0.098px;">Temperaturkoeffizient (x)</div>
<div class="a tx " style="left:605px;top:430px;color:#000;letter-spacing:-0.246px;">MAX Spannung (z)</div>
<div class="a tx " style="left:740px;top:426px;color:#000;letter-spacing:0.603px;">(x*y)-z</div>
<div class="a tx " style="left:956px;top:398px;color:#000;letter-spacing:-0.178px;">Ergebnis</div>
<div class="a" style="left:574px;top:416px;width:30px;height:14px;border:1px solid #ee9540;background:#fbdcb8"></div>
<div class="a" style="left:577px;top:419px;width:24px;height:8px;border:1px solid #ee9540;background:#fff4e4"></div>
<svg class="a" style="left:578px;top:420px" width="4" height="8" ><path d="M0,0L3.6,4L0,8z" fill="#000"/></svg>
<div class="a tx " style="left:582.5px;top:417px;color:#ee8010;font-weight:bold;font-size:8.5px;letter-spacing:0;">DBL</div>
<div class="a" style="left:652px;top:368px;width:28px;height:12px;border:2px solid #e87c1c;background:#fbdcb8"></div>
<div class="a" style="left:655px;top:371px;width:24px;height:8px;border:1px solid #ee9540;background:#fff4e4"></div>
<div class="a tx " style="left:659.5px;top:369px;color:#ee8010;font-weight:bold;font-size:8.5px;letter-spacing:0;">DBL</div>
<svg class="a" style="left:678px;top:372px" width="4" height="8" ><path d="M0,0L3.6,4L0,8z" fill="#000"/></svg>
<div class="a" style="left:742px;top:368px;width:30px;height:14px;border:1px solid #ee9540;background:#fbdcb8"></div>
<div class="a" style="left:745px;top:371px;width:24px;height:8px;border:1px solid #ee9540;background:#fff4e4"></div>
<svg class="a" style="left:746px;top:372px" width="4" height="8" ><path d="M0,0L3.6,4L0,8z" fill="#000"/></svg>
<div class="a tx " style="left:750.5px;top:369px;color:#ee8010;font-weight:bold;font-size:8.5px;letter-spacing:0;">DBL</div>
<div class="a" style="left:664px;top:412px;width:30px;height:14px;border:1px solid #ee9540;background:#fbdcb8"></div>
<div class="a" style="left:667px;top:415px;width:24px;height:8px;border:1px solid #ee9540;background:#fff4e4"></div>
<svg class="a" style="left:668px;top:416px" width="4" height="8" ><path d="M0,0L3.6,4L0,8z" fill="#000"/></svg>
<div class="a tx " style="left:672.5px;top:413px;color:#ee8010;font-weight:bold;font-size:8.5px;letter-spacing:0;">DBL</div>
<div class="a" style="left:777px;top:424px;width:30px;height:14px;border:1px solid #ee9540;background:#fbdcb8"></div>
<div class="a" style="left:780px;top:427px;width:24px;height:8px;border:1px solid #ee9540;background:#fff4e4"></div>
<svg class="a" style="left:781px;top:428px" width="4" height="8" ><path d="M0,0L3.6,4L0,8z" fill="#000"/></svg>
<div class="a tx " style="left:785.5px;top:425px;color:#ee8010;font-weight:bold;font-size:8.5px;letter-spacing:0;">DBL</div>
<svg class="a" style="left:718px;top:385px" width="22" height="22" ><path d="M0.5,0.5L21,10.5L0.5,20.5z" fill="#ffffd2" stroke="#000" stroke-width="1"/></svg>
<svg class="a" style="left:722px;top:392px" width="7" height="7" ><path d="M1,1L6,6M6,1L1,6" stroke="#000" stroke-width="1.6"/></svg>
<svg class="a" style="left:788px;top:396px" width="22" height="22" ><path d="M0.5,0.5L21,10.5L0.5,20.5z" fill="#ffffd2" stroke="#000" stroke-width="1"/></svg>
<svg class="a" style="left:793px;top:405px" width="6" height="3" ><rect x="0" y="1" width="5" height="1" fill="#000"/></svg>
<svg class="a" style="left:681px;top:485px" width="22" height="21" ><path d="M0.5,0.5L21,10.0L0.5,19.5z" fill="#ffffd2" stroke="#000" stroke-width="1"/></svg>
<svg class="a" style="left:685px;top:492px" width="7" height="7" ><path d="M1,1L6,6M6,1L1,6" stroke="#000" stroke-width="1.6"/></svg>
<div class="a" style="left:577px;top:376px;width:30px;height:30px;border:1px solid #000;background:#ffffd2"></div>
<svg class="a" style="left:577px;top:376px" width="32" height="32" shape-rendering="crispEdges"><rect x="1" y="2" width="25" height="9" fill="#000"/><rect x="2" y="3" width="23" height="7" fill="url(#chk)"/><rect x="5" y="3" width="17" height="7" fill="#fff"/>
<text x="6" y="9" font-size="8" font-weight="bold" font-family="Liberation Sans" fill="#000" textLength="14" lengthAdjust="spacingAndGlyphs" shape-rendering="auto">n.nn</text>
<rect x="2" y="14" width="3" height="3" fill="#000"/><path d="M6,16.5h2v-2.5M6.5,14.5l1.5,-1.5l1.5,1.5" stroke="#000" fill="none"/><path d="M21.5,12.5v2M20,13.5h3M23.5,15.5h1" stroke="#000" fill="none"/><rect x="26" y="14" width="3" height="3" fill="#000"/>
<rect x="2.5" y="23.5" width="5" height="5" fill="none" stroke="#000"/><rect x="4" y="25" width="2" height="2" fill="#000"/>
<path d="M11,26.5h7" stroke="#000" stroke-dasharray="1,1"/><path d="M16,26.5h4" stroke="#000"/><path d="M18,24l3,2.5l-3,2.5z" fill="#000"/>
<path d="M25.5,23v7M28.5,23v7M24,25.5h6M24,27.5h6" stroke="#000" stroke-width="1"/></svg>
<div class="a" style="left:834px;top:403px;width:30px;height:30px;border:1px solid #000;background:#ffffd2"></div>
<svg class="a" style="left:834px;top:403px" width="32" height="32" shape-rendering="crispEdges"><path d="M4.5,2v5M6.5,2v5M3,3.5h5M3,5.5h5" stroke="#000"/><rect x="10" y="3" width="9" height="2" fill="#000"/>
<path d="M10.5,6v5M10,6.5h4M10,8.5h3" stroke="#000" fill="none"/>
<path d="M19,3.5h2l1.5,1.5v6" stroke="#000" fill="none" stroke-width="1.5" shape-rendering="auto"/><path d="M18,9l4,3.5l3.5,-3.5" stroke="#000" fill="none" stroke-width="1.3" shape-rendering="auto"/>
<path d="M2.5,15v5M6.5,16v3M9.5,15v5M2,17.5h8" stroke="#000"/><path d="M2.5,25v5M6.5,26v3M9.5,25v5M2,27.5h8" stroke="#000"/><path d="M11,28.5h13" stroke="#000" stroke-dasharray="1,1"/><rect x="24" y="26" width="1" height="1" fill="#000"/>
<rect x="15.5" y="12.5" width="16" height="8" fill="#fff" stroke="#000"/><text x="17" y="19" font-size="8" font-weight="bold" font-family="Liberation Sans" fill="#000" textLength="13" lengthAdjust="spacingAndGlyphs" shape-rendering="auto">n.nn</text>
<path d="M21.5,22v1.5h8v-1.5M25.5,24v2" stroke="#000" fill="none"/></svg>
<div class="a" style="left:888px;top:413px;width:28px;height:8px;border:2px solid #e820e8;background:#fff4e4"></div>
<div class="a" style="left:897px;top:424px;width:11px;height:9px;border:2px solid #e820e8;background:#fff4e4"></div>
<svg class="a" style="left:888px;top:413px" width="32" height="25" ><rect x="7" y="5.2" width="14" height="1.6" fill="#e820e8"/><path d="M19,2.5L25,6L19,9.5z" fill="#e820e8"/><path d="M16,15l3,3l-3,3l-3,-3z" fill="#e820e8"/></svg>
<div class="a" style="left:956px;top:411px;width:30px;height:14px;border:1px solid #d850d8;background:#f8d8f8"></div>
<div class="a" style="left:958px;top:413px;width:26px;height:10px;border:1px solid #d850d8;background:#fceefc"></div>
<svg class="a" style="left:960px;top:415px" width="4" height="8" ><path d="M0,0.5L3.6,4L0,7.5z" fill="#000"/></svg>
<div class="a tx " style="left:965px;top:413px;color:#d418d4;font-weight:bold;font-size:9px;font-family:'Liberation Mono',monospace;letter-spacing:0;">abc</div>
<div class="a" style="left:623px;top:475px;width:40px;height:18px;border:2px solid #e0781c;background:#fdf0e0"></div>
<div class="a" style="left:626px;top:478px;width:36px;height:14px;border:1px solid #ee9540;background:#fff"></div>
<svg class="a" style="left:629px;top:480px" width="11" height="11" ><circle cx="5.5" cy="5.5" r="5" fill="#2060a0" stroke="#103050"/><path d="M3,3l3,1l-1,3l-2,-1z M7,6l2,1l-1,2z" fill="#60c0a0"/></svg>
<div class="a tx " style="left:640px;top:480px;color:#e8902c;letter-spacing:-0.260px;">max</div>
<div class="a" style="left:616px;top:503px;width:45px;height:13px;border:2px solid #e8821c;background:#fff"></div>
<div class="a tx " style="left:620px;top:505px;color:#000018;letter-spacing:-0.119px;">1000000</div>
<svg class="a" style="left:0;top:0" width="1306" height="687"><rect x="322" y="290.5" width="741.5" height="278.5" rx="11" ry="11" fill="none" stroke="#cf1218" stroke-width="2"/></svg>
</div></div>
<div class="a" style="left:6px;top:69px;width:1294px;height:1px;background:#404040"></div>
<div class="tb" style="left:58px;width:21px"><svg class="a" style="left:0px;top:0px" width="19" height="18"><path d="M3.5,7h4.2v-3.8l6.3,6.1l-6.3,6.1v-3.8h-4.2z" fill="#fff" stroke="#000" stroke-width="1.4"/></svg></div>
<div class="tb" style="left:78px;width:22px"><svg class="a" style="left:0px;top:0px" width="19" height="18"><path d="M6.5,4.5h5.5q2.5,0 2.5,2.5v0.5h2l-3.5,3.5l-3.5,-3.5h2.2v-0.5h-5.2z" fill="#fff" stroke="#000" stroke-width="1.2"/><path d="M12.5,14.5h-5.5q-2.5,0 -2.5,-2.5v-0.5h-2l3.5,-3.5l3.5,3.5h-2.2v0.5h5.2z" fill="#fff" stroke="#000" stroke-width="1.2"/></svg></div>
<div class="tb flat" style="left:104px;width:21px"><svg class="a" style="left:0px;top:0px" width="19" height="18"><path d="M6.5,2.5h6l4,4v6l-4,4h-6l-4,-4v-6z" fill="#f07474" stroke="#d6c4b4" stroke-width="1.4"/></svg></div>
<div class="tb" style="left:125px;width:22px"><svg class="a" style="left:0px;top:0px" width="20" height="18"><rect x="5" y="4" width="4" height="11" fill="#000"/><rect x="11" y="4" width="4" height="11" fill="#000"/></svg></div>
<div class="tb" style="left:151px;width:22px"><svg class="a" style="left:0px;top:0px" width="20" height="18"><circle cx="9.5" cy="7" r="4.5" fill="#fff" stroke="#000" stroke-width="1.2"/><path d="M8,7l1.5,4l1.5,-4" stroke="#000" fill="none" stroke-width="0.8"/><rect x="7.5" y="11.5" width="4" height="4" fill="#e8c020" stroke="#000" stroke-width="0.8"/><path d="M7.5,13.5h4" stroke="#000" stroke-width="0.8"/></svg></div>
<div class="tb" style="left:177px;width:22px"><svg class="a" style="left:0px;top:0px" width="20" height="18"><circle cx="5.5" cy="5.5" r="3.2" fill="#fff" stroke="#000"/><path d="M5,4v3l2,-1.5z" fill="#000"/><path d="M5.5,9v4" stroke="#000"/><path d="M2,13.5h6" stroke="#2040c0" stroke-width="1.5"/><rect x="8.5" y="11.5" width="4" height="4" fill="#fff" stroke="#2040c0"/><path d="M14,10.5l4,3l-4,3z" fill="#20b040"/><rect x="10.5" y="3.5" width="7" height="5" fill="#d8d0e8" stroke="#a090b0"/></svg></div>
<div class="tb" style="left:203px;width:22px"><svg class="a" style="left:0px;top:0px" width="19" height="18"><path d="M4,3v8h6" stroke="#000" stroke-width="2.2" fill="none"/><path d="M8,7.5l4.5,3.5l-4.5,3.5z" fill="#000"/><rect x="11.5" y="9.5" width="5" height="5" fill="#ffffc0" stroke="#000" stroke-width="1.2"/></svg></div>
<div class="tb" style="left:224px;width:22px"><svg class="a" style="left:0px;top:0px" width="19" height="18"><path d="M3,9v-4h10" stroke="#000" stroke-width="2.2" fill="none"/><path d="M11.5,1.5l4.5,3.5l-4.5,3.5z" fill="#000"/><rect x="4.5" y="8.5" width="7" height="6" fill="#ffffc0" stroke="#000" stroke-width="1.4"/><rect x="6" y="7" width="7" height="2" fill="#000"/></svg></div>
<div class="tb flat" style="left:245px;width:22px"><svg class="a" style="left:0px;top:0px" width="20" height="18"><rect x="3.5" y="9.5" width="5" height="5" fill="#d8d8c8" stroke="#a0a098"/><path d="M9,12h4v-4" stroke="#a8a8a0" stroke-width="2" fill="none"/><path d="M9.5,8.5l3.5,-4.5l3.5,4.5z" fill="#b0b0a8"/></svg></div>
<div class="tb" style="left:270px;width:146px"><div class="a" style="left:5px;top:3px;font-size:11px;white-space:nowrap;letter-spacing:-0.04px">13pt Application Font</div><div class="a" style="left:127px;top:2px;width:1px;height:14px;background:#808080"></div><div class="a" style="left:128px;top:2px;width:1px;height:14px;background:#fff"></div><svg class="a" style="left:132px;top:8px" width="7" height="4"><path d="M0,0h7l-3.5,4z" fill="#000"/></svg></div>
<div class="tb" style="left:420px;width:34px"><svg class="a" style="left:0px;top:0px" width="32" height="18"><rect x="5.5" y="2.5" width="4" height="4" fill="#30a030" stroke="#000"/><path d="M7.5,7v5M5,10l2.5,3l2.5,-3z" stroke="#000" fill="#000" stroke-width="0.8"/><rect x="4" y="14" width="2" height="2" fill="#000"/><rect x="7" y="14" width="2" height="2" fill="#000"/><rect x="11.5" y="10.5" width="8" height="5" fill="#ffff80" stroke="#000"/><path d="M21,7h6l-3,3.5z" fill="#000"/></svg></div>
<div class="tb" style="left:456px;width:34px"><svg class="a" style="left:0px;top:0px" width="32" height="18"><path d="M4,3.5h16" stroke="#000"/><path d="M8,1.5v2M16,1.5v2" stroke="#000"/><rect x="3" y="9" width="3" height="3" fill="#000"/><rect x="8.5" y="6.5" width="4" height="9" fill="#ffff60" stroke="#000"/><rect x="14.5" y="9.5" width="6" height="6" fill="#30b040" stroke="#000"/><path d="M21.5,7h6l-3,3.5z" fill="#000"/></svg></div>
<div class="tb" style="left:495px;width:34px"><svg class="a" style="left:0px;top:0px" width="32" height="18"><path d="M11,5.5a4,4 0 1 0 1.5,6" stroke="#6a6a6a" stroke-width="2.4" fill="none"/><path d="M17,5.5a4,4 0 1 1 -6.5,5.5" stroke="#8a8a8a" stroke-width="2.4" fill="none"/><path d="M12.5,2v6l-4.5,-3z" fill="#303030"/><path d="M17.5,2v6l-4.5,-3z" fill="#303030"/><path d="M21,7h6l-3,3.5z" fill="#000"/></svg></div>
<div class="tb" style="left:531px;width:26px"><svg class="a" style="left:0px;top:0px" width="24" height="18"><path d="M3,3.5l9,4.5l-9,4.5z" fill="#f4e828" stroke="#a09010" stroke-width="0.8"/><path d="M5,8h3.5M6.8,6.3v3.4" stroke="#000"/><path d="M1,8h2" stroke="#2020c0"/><rect x="17" y="1" width="2" height="9" fill="#805028"/><path d="M11,12l8,-3l3,5l-9,3z" fill="#b89058"/><path d="M12,14l8,-3M13,16l8,-3" stroke="#806030" stroke-width="0.7"/></svg></div>
<div class="tb pr" style="left:1241px;width:22px"><div class="a" style="left:4px;top:-2px;font-size:19px;line-height:22px;font-weight:bold;color:#f8f048;-webkit-text-stroke:0.8px #181800;">?</div></div>
<div class="a" style="left:1265px;top:25px;width:1px;height:44px;background:#404040"></div>
<div class="a" style="left:1266px;top:25px;width:1px;height:44px;background:#fff"></div>
<div class="a" style="left:1267px;top:31px;width:30px;height:30px;border:1px solid #000;background:#fff">
<svg class="a" style="left:0;top:0" width="30" height="30"><rect x="2.5" y="2.5" width="18" height="15" fill="#f4ece0" stroke="#000"/><rect x="3" y="3" width="17" height="9.5" fill="#d8d8d8"/><rect x="4" y="4" width="11" height="8" fill="#062806" stroke="#000" stroke-width="0.6"/><path d="M4.5,9q1.3,-8 2.6,0t2.6,0t2.6,0t2,-3" stroke="#38e038" fill="none" stroke-width="1.1"/><circle cx="17.5" cy="8.7" r="1.3" fill="none" stroke="#000" stroke-width="0.7"/><path d="M16.5,4.5h2M16.5,6h2" stroke="#606060" stroke-width="0.6"/><path d="M4,15.5h2M5,14.5v2" stroke="#202020" stroke-width="0.8"/><path d="M4,18q6,7 12,0" stroke="#3c1c8c" fill="none" stroke-width="1.2"/><circle cx="10.2" cy="17.3" r="1.9" fill="#fff" stroke="#e02828" stroke-width="1.1"/><path d="M12.5,16.2h16.5" stroke="#e89818" stroke-width="1.3"/><path d="M18.5,12.2l8,4.2l-8,4.2z" fill="#f4e828" stroke="#a09008" stroke-width="0.7"/><path d="M20.3,16.4h3M21.8,14.9v3" stroke="#000" stroke-width="0.9"/></svg>
<div class="a" style="left:23px;top:20px;font-size:9px;line-height:9px">1</div></div>
<!-- scrollbars -->
<div class="a dither" style="left:1284px;top:70px;width:16px;height:595px"></div>
<div class="a dither" style="left:6px;top:665px;width:1278px;height:16px"></div>
<div class="a" style="left:1284px;top:665px;width:16px;height:16px;background:#d4d0c8"></div>
<svg class="a" style="left:1287px;top:668px" width="13" height="13"><path d="M12,2L2,12M12,6L6,12M12,10L10,12" stroke="#808080"/><path d="M12,1L1,12M12,5L5,12M12,9L9,12" stroke="#fff"/></svg>
<div class="sbtn" style="left:1284px;top:70px;width:16px;height:16px"><svg class="a" style="left:3px;top:5px" width="7" height="4"><path d="M0,4h7l-3.5,-4z" fill="#000"/></svg></div>
<div class="sbtn" style="left:1284px;top:649px;width:16px;height:16px"><svg class="a" style="left:3px;top:5px" width="7" height="4"><path d="M0,0h7l-3.5,4z" fill="#000"/></svg></div>
<div class="sbtn" style="left:1284px;top:310px;width:16px;height:339px"></div>
<div class="sbtn" style="left:6px;top:665px;width:16px;height:16px"><svg class="a" style="left:4px;top:3px" width="4" height="7"><path d="M4,0v7l-4,-3.5z" fill="#000"/></svg></div>
<div class="sbtn" style="left:1268px;top:665px;width:16px;height:16px"><svg class="a" style="left:5px;top:3px" width="4" height="7"><path d="M0,0v7l4,-3.5z" fill="#000"/></svg></div>
<div class="sbtn" style="left:1040px;top:665px;width:74px;height:16px"></div>
</div>
</body></html>
